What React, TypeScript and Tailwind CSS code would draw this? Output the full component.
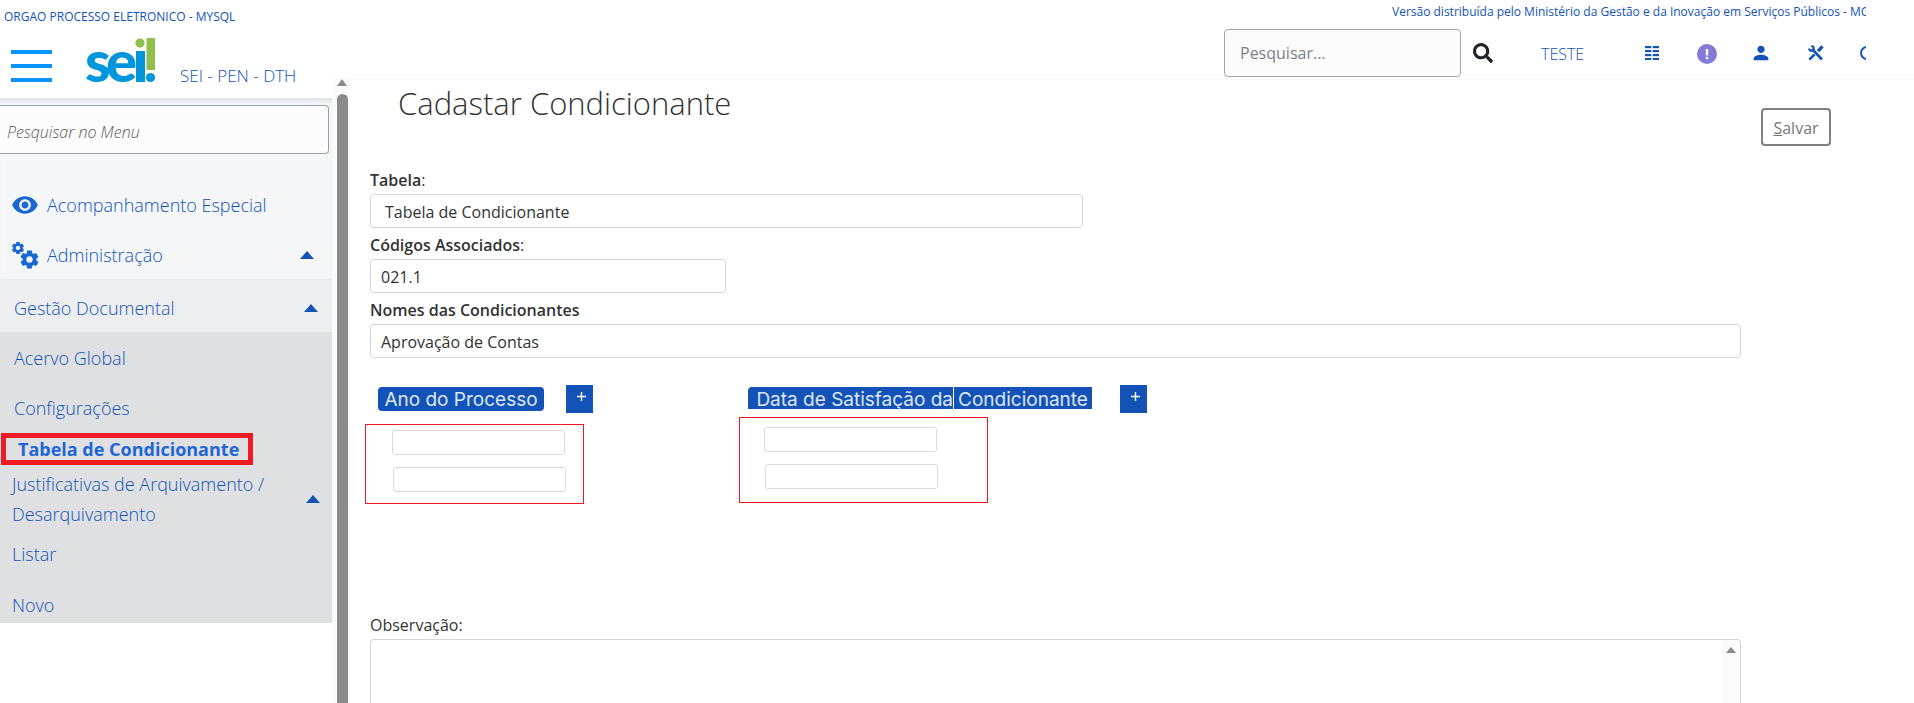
import { useId, type ReactNode } from "react";
import { FaSearch } from "react-icons/fa";
import { MdVisibility, MdPerson } from "react-icons/md";

function Caret() {
  return (
    <svg viewBox="0 0 14 8" className="h-2 w-3.5 shrink-0" aria-hidden="true">
      <path d="M7 0 14 8H0z" fill="#1353b8" />
    </svg>
  );
}

const TEETH = [0, 60, 120, 180, 240, 300];

function Gear({ cx, cy, r }: { cx: number; cy: number; r: number }) {
  return (
    <g transform={`translate(${cx} ${cy}) scale(${r / 9})`}>
      {TEETH.map((a) => (
        <path key={a} d="M-2.4 -9H2.4L3.2 -4H-3.2z" transform={`rotate(${a})`} fill="#1967d2" />
      ))}
      <circle r="5" fill="none" stroke="#1967d2" strokeWidth="3.6" />
    </g>
  );
}

function GearsIcon() {
  return (
    <svg viewBox="0 0 28 28" className="h-7 w-7 shrink-0" aria-hidden="true">
      <Gear cx={7} cy={7} r={6} />
      <Gear cx={18.5} cy={18.5} r={9} />
    </svg>
  );
}

function Logo() {
  return (
    <svg viewBox="0 0 70 46" className="h-[46px] w-[70px] overflow-visible" role="img" aria-label="sei!">
      <g fontSize="58" fontWeight="900" fill="#0096dc" fontFamily="Lato, sans-serif">
        <text x="-1" y="44">s</text>
        <text x="20" y="44">e</text>
      </g>
      <rect x="50" y="13" width="9" height="31" fill="#0096dc" />
      <circle cx="54" cy="5" r="4.6" fill="#8fc04d" />
      <rect x="60.500" y="0" width="8.500" height="32" fill="#8fc04d" />
      <circle cx="64.500" cy="39.500" r="4.600" fill="#0096dc" />
    </svg>
  );
}

function TableIcon() {
  return (
    <svg viewBox="0 0 14 14" className="h-3.5 w-3.5" fill="#1353b8" aria-hidden="true">
      {[0, 4, 8, 12].map((y) => (
        <g key={y}>
          <rect x="0" y={y} width="6.300" height="2.200" />
          <rect x="7.700" y={y} width="6.300" height="2.200" />
        </g>
      ))}
    </svg>
  );
}

function ToolsIcon() {
  return (
    <svg viewBox="0 0 16 16" className="h-4 w-4" fill="none" stroke="#1353b8" aria-hidden="true">
      <path d="M4 4 14 14.500" strokeWidth="2.600" />
      <path d="M1 3.500C1.500 6.500 5.500 6.500 5.800 4.300C6 2.500 5 1.200 3.300 1" strokeWidth="2" />
      <path d="M10 6.200 14.500 1.300" strokeWidth="3.200" />
      <path d="M1.300 14.700 6.500 9.500" strokeWidth="2.600" />
    </svg>
  );
}

function MenuItem({ className, children }: { className: string; children: ReactNode }) {
  return (
    <a href="#" className={`flex items-center text-lg font-light text-[#1353b8] ${className}`}>
      {children}
    </a>
  );
}

function Sidebar() {
  return (
    <aside className="w-[332px] shrink-0">
      <div className="flex h-[99px] flex-col border-b border-[#e3e3e3] text-[#1353b8]">
        <p className="px-1 pt-2 text-xs leading-[18px]">ORGAO PROCESSO ELETRONICO - MYSQL</p>
        <div className="flex items-start pl-[11px] pt-3">
          <button type="button" aria-label="Menu" className="mt-3 flex w-[41px] flex-col gap-[10px]">
            <span className="h-1 w-full bg-[#0a94fb]" />
            <span className="h-1 w-full bg-[#0a94fb]" />
            <span className="h-1 w-full bg-[#0a94fb]" />
          </button>
          <div className="ml-[34px]">
            <Logo />
          </div>
          <span className="ml-6 mt-[26px] text-[17px] font-light leading-6">SEI - PEN - DTH</span>
        </div>
      </div>
      <nav className="bg-[#f4f6f8] shadow-[inset_0_4px_4px_-3px_#d8dadc]">
        <div className="pr-[3px] pt-1.5">
          <input
            type="text"
            aria-label="Pesquisar no Menu"
            placeholder="Pesquisar no Menu"
            className="h-[49px] w-full rounded-r border border-l-0 border-[#9aa0a6] bg-[#fcfcfc] pl-[7px] pt-1 text-base font-light italic placeholder:text-[#5b5b5b]"
          />
        </div>
        <div className="pt-[26px]">
          <MenuItem className="h-[50px] gap-2 pl-[11px]">
            <MdVisibility className="size-7 shrink-0 text-[#1967d2]" />
            Acompanhamento Especial
          </MenuItem>
          <MenuItem className="h-[49px] gap-2 pl-[11px] pr-[18px]">
            <GearsIcon />
            <span className="grow">Administração</span>
            <Caret />
          </MenuItem>
        </div>
        <MenuItem className="h-[53px] bg-[#edeef0] pl-3.5 pr-3.5 pt-1">
          <span className="grow">Gestão Documental</span>
          <Caret />
        </MenuItem>
        <div className="bg-[#dfe0e2]">
          <MenuItem className="h-[50px] pl-3.5 pt-0.5">Acervo Global</MenuItem>
          <MenuItem className="h-[51px] pl-3.5">Configurações</MenuItem>
          <a
            href="#"
            aria-current="page"
            className="ml-px flex h-8 w-[252px] items-center border-[5px] border-[#ed1c24] pl-3 text-lg font-bold leading-5 text-[#1f66d6]"
          >
            Tabela de Condicionante
          </a>
          <MenuItem className="pl-3 pr-3 pt-1">
            <span className="grow leading-[30px]">
              Justificativas de Arquivamento /<br />
              Desarquivamento
            </span>
            <Caret />
          </MenuItem>
          <MenuItem className="h-[50px] pl-3">Listar</MenuItem>
          <MenuItem className="h-11 pl-3 pt-2">Novo</MenuItem>
        </div>
      </nav>
    </aside>
  );
}

function TopBar() {
  return (
    <header className="h-20 border-b border-[#f8f8f8] pr-12 text-[#1353b8]">
      <p className="ml-auto h-[23px] w-[474px] overflow-hidden whitespace-nowrap text-xs leading-[23px]">
        Versão distribuída pelo Ministério da Gestão e da Inovação em Serviços Públicos - MG
      </p>
      <div className="flex items-center justify-end pt-1.5">
        <input
          type="text"
          aria-label="Pesquisar"
          placeholder="Pesquisar..."
          className="h-12 w-[237px] rounded border border-[#a3a8a8] bg-[#fcfcfc] px-[15px] text-base placeholder:text-[#7b8087]"
        />
        <button type="button" aria-label="Buscar" className="ml-3 text-[#212529]">
          <FaSearch className="size-5" />
        </button>
        <a href="#" className="ml-12 w-[104px] pt-0.5 text-base font-light">TESTE</a>
        <a href="#" aria-label="Tabelas"><TableIcon /></a>
        <a href="#" aria-label="Avisos" className="ml-[38px] mt-0.5 flex size-5 items-center justify-center rounded-full bg-[#8379d6]">
          <svg viewBox="0 0 4 12" className="h-3 w-1" fill="#fff" aria-hidden="true">
            <rect x="0.800" y="1" width="2.400" height="6.500" />
            <rect x="0.800" y="8.800" width="2.400" height="2.400" />
          </svg>
        </a>
        <a href="#" aria-label="Usuário" className="ml-[33px]"><MdPerson className="size-[22px] text-[#1353b8]" /></a>
        <a href="#" aria-label="Configurações" className="ml-9"><ToolsIcon /></a>
        <a href="#" aria-label="Sair" className="ml-9 w-1.5 overflow-hidden">
          <svg viewBox="0 0 14 14" className="h-3.5 w-3.5 max-w-none" aria-hidden="true">
            <circle cx="7" cy="7" r="6" fill="none" stroke="#1353b8" strokeWidth="2" />
          </svg>
        </a>
      </div>
    </header>
  );
}

function Field({ label, colon, value, width, pad }: { label: string; colon: boolean; value: string; width: string; pad: string }) {
  const id = useId();
  return (
    <div className="flex flex-col">
      <label htmlFor={id} className="flex h-[31px] items-center pt-0.5 text-base">
        <span className="font-semibold">{label}</span>
        {colon && ":"}
      </label>
      <input id={id} type="text" defaultValue={value} className={`h-[34px] rounded border border-[#d2d7dc] pt-0.5 text-base ${width} ${pad}`} />
    </div>
  );
}

function AddButton({ label }: { label: string }) {
  return (
    <button type="button" aria-label={label} className="flex h-7 w-[27px] items-start justify-center bg-[#1353b8] pt-[7px] pl-1">
      <svg viewBox="0 0 9 9" className="size-[9px]" aria-hidden="true">
        <path d="M4.500 0V9M0 4.500H9" stroke="#fff" strokeWidth="1.400" />
      </svg>
    </button>
  );
}

function ShortInput({ label, indent }: { label: string; indent: string }) {
  return <input type="text" aria-label={label} className={`h-[25px] w-[173px] rounded-[3px] border border-[#d8dce0] ${indent}`} />;
}

export default function App() {
  return (
    <div className="flex min-h-screen overflow-hidden bg-white font-['Open_Sans',sans-serif] text-[#333]">
      <Sidebar />
      <div className="mt-[79px] flex w-[18px] shrink-0 flex-col items-center bg-[#fafafa] pl-0.5" aria-hidden="true">
        <svg viewBox="0 0 10 7" className="h-[7px] w-2.5">
          <path d="M5 0 10 7H0z" fill="#8a8a8a" />
        </svg>
        <div className="mt-2 w-[11px] grow rounded-t-full bg-[#8a8a8a]" />
      </div>
      <div className="flex min-w-0 grow flex-col">
        <TopBar />
        <main className="flex grow flex-col pl-5 pr-[173px]">
          <div className="-mr-[90px] flex items-start justify-between pl-7">
            <h1 className="text-[31px] font-light leading-[46px] text-[#333]">Cadastar Condicionante</h1>
            <button type="button" className="mt-7 h-[38px] w-[70px] rounded border-2 border-[#808080] pt-0.5 text-base leading-5 text-[#777]">
              <span className="underline">S</span>alvar
            </button>
          </div>
          <form className="flex grow flex-col pt-[17px]">
            <Field label="Tabela" colon value="Tabela de Condicionante" width="w-[52%]" pad="px-3.5" />
            <Field label="Códigos Associados" colon value="021.1" width="w-[26%]" pad="px-2.5" />
            <Field label="Nomes das Condicionantes" colon={false} value="Aprovação de Contas" width="w-full" pad="px-2.5" />
            <div className="-ml-[5px] flex pt-[27px]">
              <section className="w-[374px]">
                <div className="flex items-start pl-[13px]">
                  <h2 className="mt-0.5 flex h-6 w-[166px] items-center justify-center rounded bg-[#1353b8] pt-0.5 font-['Inter',sans-serif] text-[19px] text-[#dfe6f5]">
                    Ano do Processo
                  </h2>
                  <div className="ml-[22px]">
                    <AddButton label="Adicionar ano" />
                  </div>
                </div>
                <div className="mt-[11px] flex h-20 w-[219px] flex-col gap-3 border border-[#ed1c24] pl-[26px] pt-[5px]">
                  <ShortInput label="Ano 1" indent="" />
                  <ShortInput label="Ano 2" indent="ml-px" />
                </div>
              </section>
              <section>
                <div className="flex items-start pl-[9px]">
                  <h2 className="mt-0.5 flex h-[22px] w-[344px] whitespace-nowrap rounded-tl bg-[#1353b8] font-['Inter',sans-serif] text-[19px] leading-[26px] text-[#dfe6f5]">
                    <span className="w-[206px] border-r border-white text-right">Data de Satisfação da</span>
                    <span className="grow text-center">Condicionante</span>
                  </h2>
                  <div className="ml-7">
                    <AddButton label="Adicionar data" />
                  </div>
                </div>
                <div className="mt-1 flex h-[86px] w-[249px] flex-col gap-3 border border-[#ed1c24] pl-6 pt-[9px]">
                  <ShortInput label="Data 1" indent="" />
                  <ShortInput label="Data 2" indent="ml-px" />
                </div>
              </section>
            </div>
            <label htmlFor="obs" className="mt-[107px] flex h-7 items-center text-base">Observação:</label>
            <div className="flex min-h-16 grow overflow-hidden rounded-t border border-b-0 border-[#d2d7dc]">
              <textarea id="obs" className="grow resize-none p-2 text-base outline-none" />
              <div className="flex w-[18px] justify-center bg-[#fbfbfb] pt-[7px]" aria-hidden="true">
                <svg viewBox="0 0 10 6" className="h-1.5 w-2.5">
                  <path d="M5 0 10 6H0z" fill="#8a8a8a" />
                </svg>
              </div>
            </div>
          </form>
        </main>
      </div>
    </div>
  );
}
